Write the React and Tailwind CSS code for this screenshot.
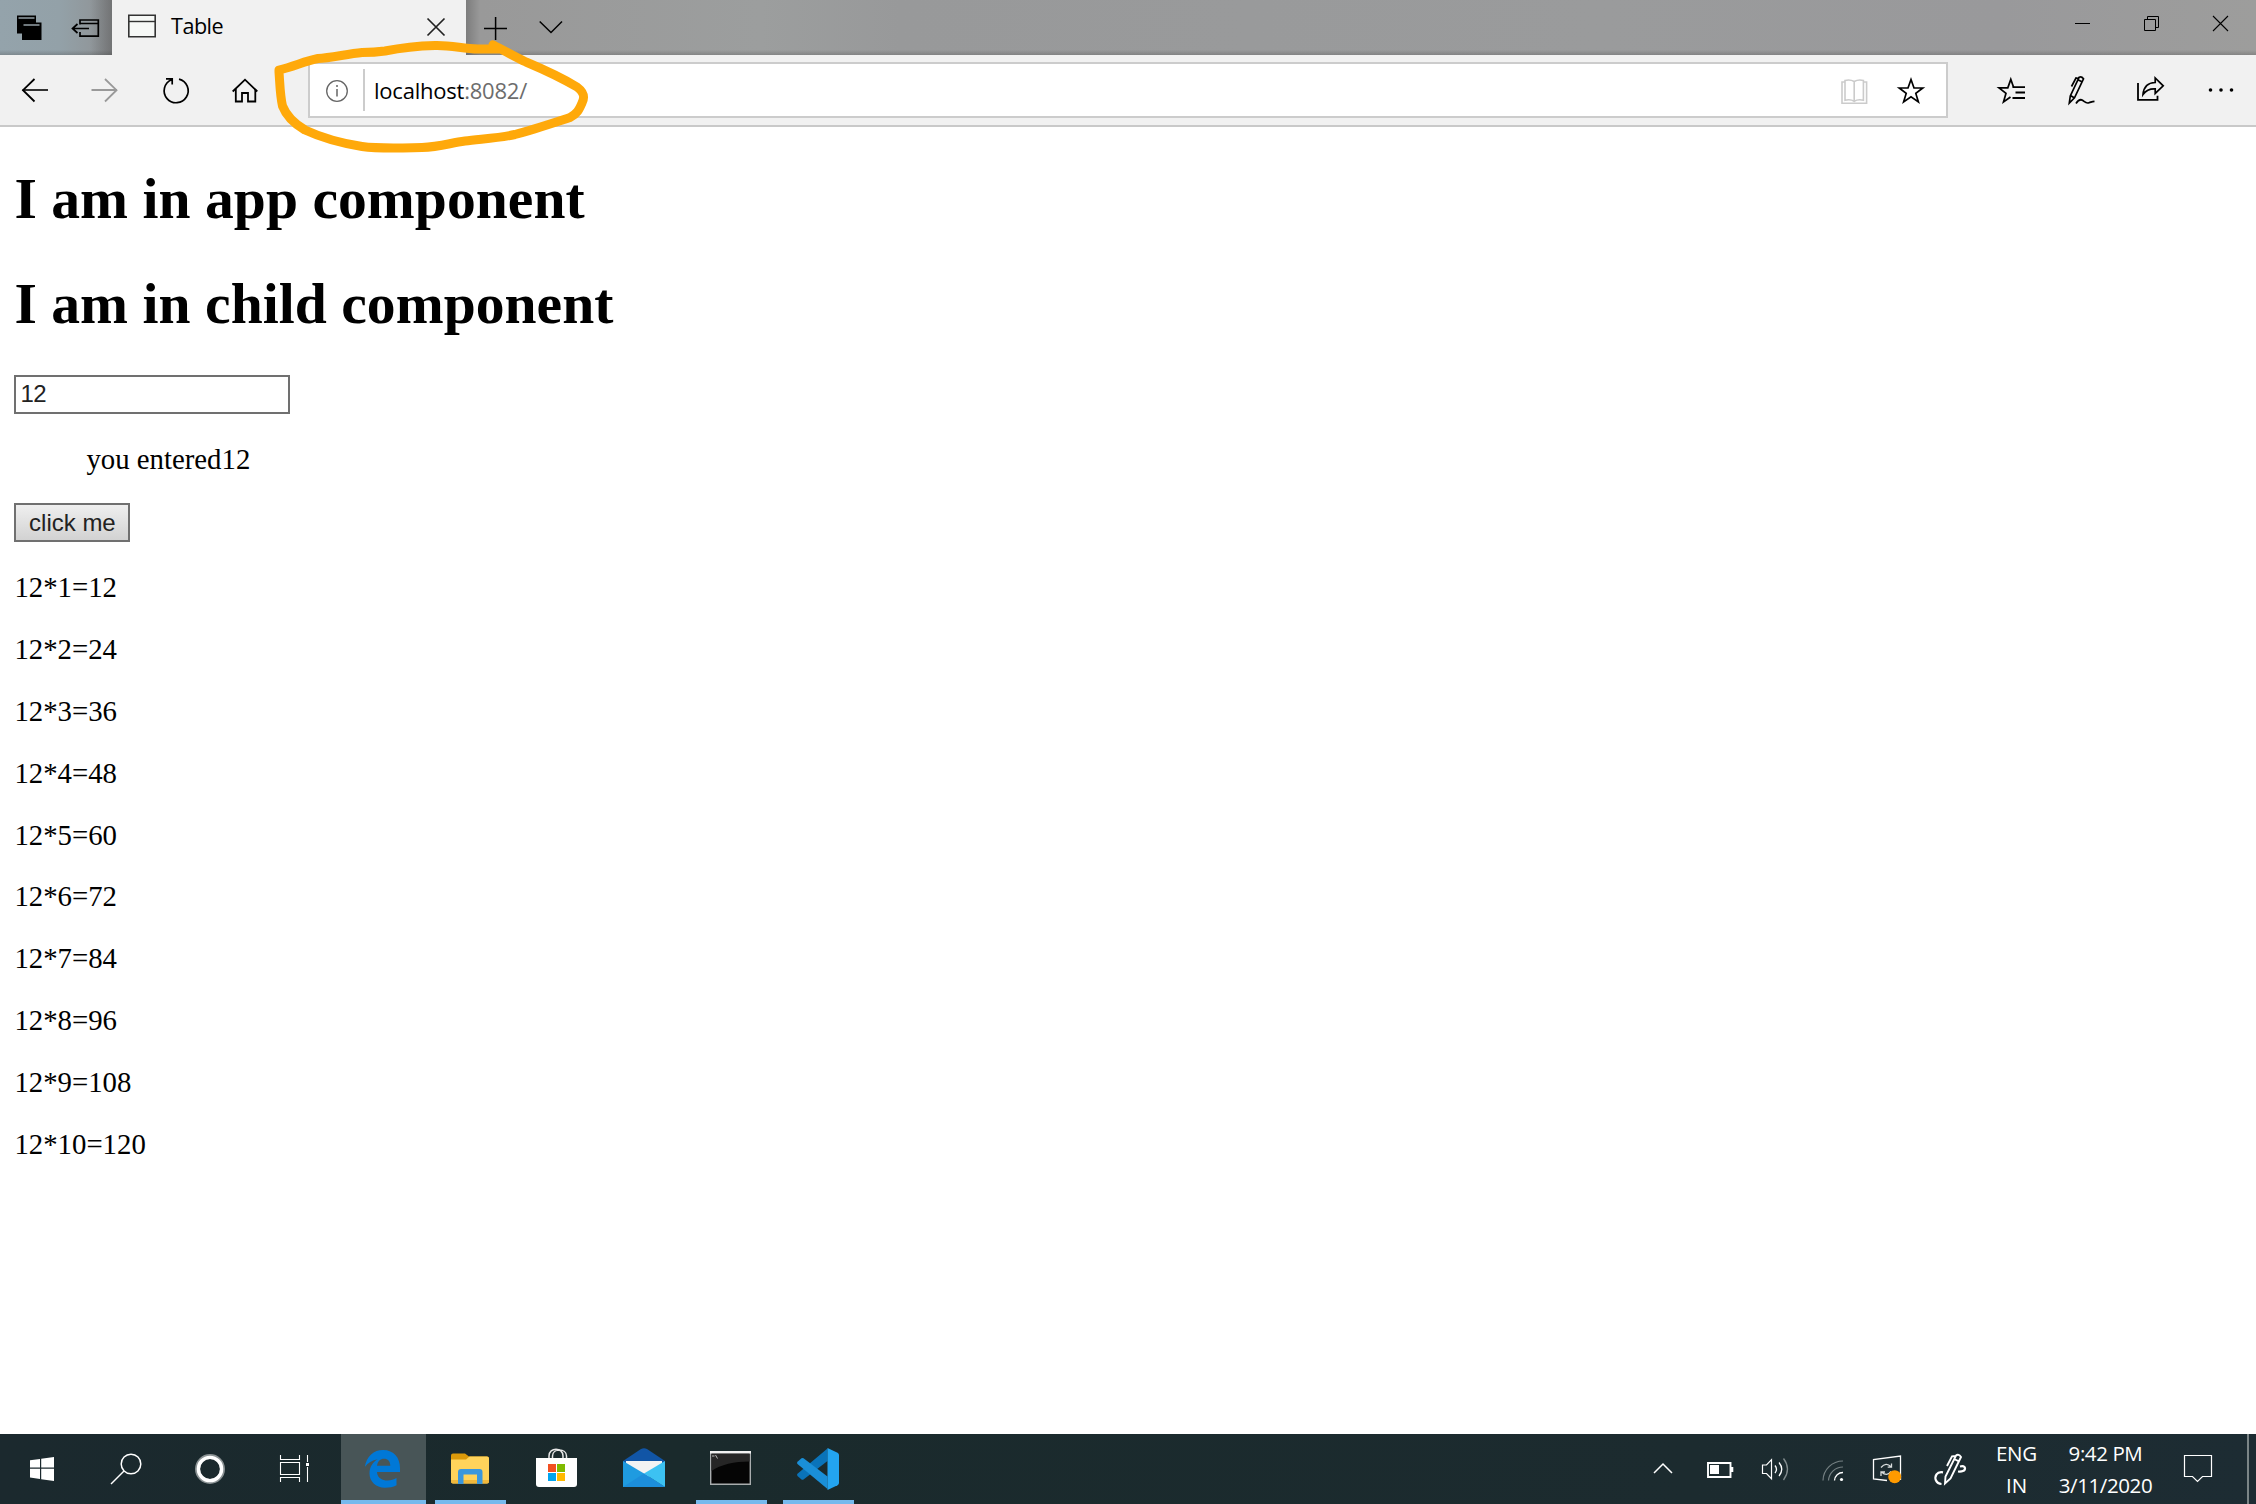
import React from "react";

/* Icon whose drawing coordinates are window coordinates: (x, y) is the cell's corner. */
function Cell({ x, y, w, h, className = "", children }) {
  return (
    <svg
      width={w}
      height={h}
      viewBox={`${x} ${y} ${w} ${h}`}
      fill="none"
      stroke="#000"
      strokeWidth="2"
      className={`block shrink-0 ${className}`}
    >
      {children}
    </svg>
  );
}

function TabBar() {
  return (
    <div className="flex h-[55px] bg-[linear-gradient(0deg,rgba(60,60,60,0.25)_0px,transparent_5px),linear-gradient(90deg,#94a3ab_0px,#93a1a8_60px,#8f9193_112px,#999999_480px,#9c9e9e_760px,#98999a_900px,#9a9b9c_1600px,#99999b_2000px,#9d9d9c_2256px)]">
      <div className="flex w-[112px] bg-[linear-gradient(90deg,transparent_90px,rgba(60,60,60,0.35)_112px)]">
        <Cell x={0} y={0} w={56} h={55}>
          <path d="M17 15.500h19v7h5.500v17.500H22v-6.500h-5z" fill="#000" stroke="none" />
          <path d="M18.500 18h16M23.500 25h16" stroke="#94a0a6" strokeWidth="1.400" />
        </Cell>
        <Cell x={56} y={0} w={56} h={55}>
          <path d="M80 24.500V20h18.300v16.200H80V32M80 23.500h18" strokeWidth="1.700" />
          <path d="M89 28.500H72.500M77.500 24l-5 4.500 5 4.500" strokeWidth="1.700" />
        </Cell>
      </div>
      <div className="flex w-[354px] items-center bg-[#f1f1f1]">
        <Cell x={112} y={0} w={60} h={55}>
          <path d="M128.800 15.300h26.400v21.400h-26.400z" fill="#f6f8f6" stroke="#333" strokeWidth="1.600" />
          <path d="M128.800 21.500h26.400" stroke="#333" strokeWidth="1.400" />
        </Cell>
        <span className="-ml-px grow pb-[3px] text-[21.6px] leading-[30px] tracking-[-0.5px] text-black">
          Table
        </span>
        <Cell x={406} y={0} w={60} h={55}>
          <path d="M427.500 18.500l17 17M444.500 18.500l-17 17" stroke="#222" strokeWidth="1.700" />
        </Cell>
      </div>
      <div className="flex grow bg-[linear-gradient(90deg,rgba(60,60,60,0.3)_0px,transparent_14px)]">
        <Cell x={466} y={0} w={58} h={55}>
          <path d="M484 28.500h23M495.600 17v23" strokeWidth="1.500" />
        </Cell>
        <Cell x={524} y={0} w={54} h={55}>
          <path d="M539.700 21.500l11.300 11 11-11" strokeWidth="1.500" />
        </Cell>
        <div className="grow" />
        <Cell x={2048} y={0} w={69} h={55}>
          <path d="M2075 23.500h15" strokeWidth="1" />
        </Cell>
        <Cell x={2117} y={0} w={70} h={55}>
          <path d="M2144.500 19.500h11v11h-11zM2147.500 19.500v-3h11v11h-3" strokeWidth="1" />
        </Cell>
        <Cell x={2187} y={0} w={69} h={55}>
          <path d="M2213 16l15 15M2228 16l-15 15" strokeWidth="1.100" />
        </Cell>
      </div>
    </div>
  );
}

function Toolbar() {
  return (
    <div className="flex h-[72px] border-b-2 border-[#c9c9c9] bg-[#f1f1f1]">
      <Cell x={0} y={55} w={70} h={70}>
        <path d="M22.500 90H48" stroke="#333" />
        <path d="M34.500 79L23 90.200l11.500 11.300" strokeWidth="1.800" />
      </Cell>
      <Cell x={70} y={55} w={70} h={70}>
        <path d="M91.500 90H117M105 79l11.500 11.200L105 101.500" stroke="#999" strokeWidth="1.800" />
      </Cell>
      <Cell x={140} y={55} w={70} h={70}>
        <path d="M179 79.100a12 12 0 1 1-7.500 0.600M166 78.900h6.200v5.700" strokeWidth="1.700" />
      </Cell>
      <Cell x={210} y={55} w={98} h={70}>
        <path d="M232.700 91.500L245 79.700l12.300 11.800" strokeWidth="1.800" />
        <path d="M235.800 89v12.500h6.200v-8.500h6v8.500h7.300V89" strokeWidth="1.800" />
      </Cell>
      <div className="mt-[7px] flex h-14 w-[1640px] items-center border-2 border-[#cccccc] bg-white">
        <Cell x={310} y={64} w={53} h={52}>
          <circle cx="337" cy="91" r="10.300" stroke="#666" strokeWidth="1.300" />
          <path d="M337 89v7.500M337 85v2" stroke="#666" strokeWidth="1.500" />
        </Cell>
        <div className="h-[42px] w-0.5 bg-[#cccccc]" />
        <span className="ml-[9px] grow text-[22px] leading-[30px] tracking-[-0.22px] text-black">
          localhost<span className="text-[#6d6d6d]">:8082/</span>
        </span>
        <Cell x={1826} y={64} w={56} h={52}>
          <path d="M1845 80.500v19.700c3-.600 6.500-.600 9.200 1 2.700-1.600 6.200-1.600 9.200-1V80.500c-3-.700-6.500-.500-9.200 1-2.700-1.500-6.200-1.700-9.200-1zM1854.200 81.500v20M1845 82h-3v21.200h24.600V82h-3" stroke="#cbcbcb" strokeWidth="1.600" />
        </Cell>
        <Cell x={1882} y={64} w={64} h={52}>
          <path d="M1911 79.500l3 8.500h8.800l-7 5.400 2.600 8.600-7.400-5.200-7.400 5.200 2.600-8.600-7-5.400h8.800z" strokeWidth="1.700" />
        </Cell>
      </div>
      <Cell x={1948} y={55} w={98} h={70}>
        <path d="M2010.500 97l-7 5 2.500-8.700-7-5.400h8.800l3-8.500 2.800 7.800" strokeWidth="1.700" />
        <path d="M2012.500 87.200h12.500M2015.500 92.500h9.500M2012.500 98h12.500" strokeWidth="1.800" />
      </Cell>
      <Cell x={2046} y={55} w={70} h={70}>
        <path d="M2069.300 103l1-7 8.900-18.800q2.300-1.300 4.300 1.600l-9 19zM2070.500 95.500l4 2.500M2078.300 80l4.200 1.900M2079 78.600l-3-.6-4.500 8.500" strokeWidth="1.700" />
        <path d="M2076 103.500c2-3 4.500-4.500 6.500-3.200 2.500 1.700 3.500 3.500 6.500 2.500 2.500-.8 3-1.300 5.500-1.500" strokeWidth="1.700" />
      </Cell>
      <Cell x={2116} y={55} w={69} h={70}>
        <path d="M2138 83v16.800h19.500v-4" strokeWidth="1.800" />
        <path d="M2143 94.500c.6-7 4.500-11.800 12.200-12v-4.500l8 7.800-8 7.600v-4.500c-5.600-.300-9.200 1.500-12.200 5.600z" strokeWidth="1.700" />
      </Cell>
      <Cell x={2185} y={55} w={71} h={70}>
        <g fill="#000" stroke="none">
          <circle cx="2210.500" cy="90" r="1.800" />
          <circle cx="2221" cy="90" r="1.800" />
          <circle cx="2231.500" cy="90" r="1.800" />
        </g>
      </Cell>
    </div>
  );
}

function PageContent() {
  const factors = [1, 2, 3, 4, 5, 6, 7, 8, 9, 10];
  return (
    <div className="flex grow flex-col items-start bg-white px-[14.4px] pt-[38.6px] font-['Liberation_Serif',serif] text-[28.8px] leading-[33px] text-black">
      <h1 className="mb-[39.4px] text-[57.6px] leading-[66px] font-bold tracking-[0.03px]">I am in app component</h1>
      <h1 className="mb-[38px] text-[57.6px] leading-[66px] font-bold tracking-[0.03px]">I am in child component</h1>
      <input
        readOnly
        value="12"
        className="h-[39px] w-[276px] border-2 border-[#707070] bg-white px-[4px] font-['Liberation_Sans',sans-serif] text-[24px] leading-[27px] tracking-[-0.4px] text-[#222]"
      />
      <p className="mt-[29px] ml-[72px]">you entered12</p>
      <button className="mt-[27.500px] h-[39px] w-[116px] border-2 border-[#707070] bg-[linear-gradient(#efefef,#d2d2d2)] text-center font-['Liberation_Sans',sans-serif] text-[24px] leading-[35px] text-[#222]">
        click me
      </button>
      <div className="mt-[29px] flex flex-col gap-[28.8px]">
        {factors.map((n) => (
          <p key={n}>{`12*${n}=${12 * n}`}</p>
        ))}
      </div>
    </div>
  );
}

function TaskButton({ underline = "", active = false, children }) {
  return (
    <div className={`flex h-[70px] flex-col items-center ${active ? "bg-[#485557]" : ""}`}>
      <div className="h-[66px]">{children}</div>
      <div className={`h-1 ${underline}`} />
    </div>
  );
}

function Taskbar() {
  return (
    <div className="flex h-[70px] bg-[linear-gradient(90deg,#1b292e,#1a2a2c_30%,#1c2b2f_75%,#1d2c33)]">
      <Cell x={0} y={1434} w={84} h={70}>
        <path d="M30 1460.300l10-1.400v8.600H30zM41.200 1458.700l12.800-1.800v10.600H41.200zM30 1468.800h10v10.200l-10-1.400zM41.200 1468.800H54v12.300l-12.800-1.900z" fill="#fff" stroke="none" />
      </Cell>
      <Cell x={84} y={1434} w={84} h={70}>
        <circle cx="131" cy="1464" r="9.800" stroke="#fff" strokeWidth="1.500" />
        <path d="M124 1471l-13 13" stroke="#fff" strokeWidth="1.500" />
      </Cell>
      <Cell x={168} y={1434} w={84} h={70}>
        <circle cx="210" cy="1469" r="12.500" stroke="#8b9294" strokeWidth="5" />
        <circle cx="210" cy="1469" r="11.600" stroke="#fff" strokeWidth="3.400" />
      </Cell>
      <Cell x={252} y={1434} w={89} h={70}>
        <path d="M280.500 1455v4.500h19V1455M280.500 1482v-4.500h19v4.500M280.500 1462.500h19v12h-19zM307.500 1455v7M307.500 1467v15" stroke="#fff" strokeWidth="1.100" />
        <path d="M306 1463h3v3h-3z" fill="#fff" stroke="none" />
      </Cell>
      <TaskButton active underline="w-[85px] bg-[#76b9ed]">
        <Cell x={341} y={1434} w={85} h={66}>
          <path d="M364.800 1467.500C366.300 1456 374 1450 383 1450c11 0 17 7.800 17 18v4h-23c.3 6.300 5.500 8.500 10.500 8.500 3.500 0 6.500-1 9-2.400v7.200c-3.500 1.800-7.300 2.500-11.500 2.500-9.500 0-15.500-6.500-15.500-14.500 0-6.300 3.300-11.300 8.300-14-5.700 1-10.300 4-13 7.700zM377 1465.800h13.300c0-4.500-2.500-7-6.300-7-3.700 0-6.300 2.600-7 7z" fill="#0078d7" fillRule="evenodd" stroke="none" />
        </Cell>
      </TaskButton>
      <TaskButton underline="w-[71px] bg-[#76b9ed]">
        <Cell x={426} y={1434} w={89} h={66}>
          <g stroke="none">
            <path d="M451 1455.500q0-2 2-2h12l4 3h18q2 0 2 2v6h-38z" fill="#dc9a0a" />
            <path d="M451 1459.500h15l3.500-3h17.500q2 0 2 2v23q0 2-2 2h-34q-2 0-2-2z" fill="#ffd35b" />
            <path d="M451 1480h38v1.500q0 2-2 2h-34q-2 0-2-2z" fill="#f0b83c" />
            <path d="M458 1484v-12q0-3 3-3h18.500q3 0 3 3v12h-5.500v-9.500h-13.500v9.500z" fill="#3a97dd" />
          </g>
        </Cell>
      </TaskButton>
      <TaskButton>
        <Cell x={515} y={1434} w={86} h={66}>
          <path d="M549 1459v-3c0-9 14-9 14 0v3M552.500 1459v-3c0-8 14-8 14 0v3" stroke="#e6e6e6" strokeWidth="1.500" />
          <g stroke="none">
            <path d="M536 1458h41v26q0 3-3 3h-35q-3 0-3-3z" fill="#fff" />
            <path d="M548 1464h8v8h-8z" fill="#f25022" />
            <path d="M557 1464h8v8h-8z" fill="#7fba00" />
            <path d="M548 1473h8v8h-8z" fill="#00a4ef" />
            <path d="M557 1473h8v8h-8z" fill="#ffb900" />
          </g>
        </Cell>
      </TaskButton>
      <TaskButton>
        <Cell x={601} y={1434} w={87} h={66}>
          <g stroke="none">
            <path d="M623 1461l18-12q3-1.500 6 0l18 12v8h-42z" fill="#1155a6" />
            <path d="M626 1461h36v9l-18 9-18-9z" fill="#f3f3f3" />
            <path d="M623 1461l21 12.500 21 13.500h-42z" fill="#1f9be0" />
            <path d="M665 1461l-21 12.500 21 13.500z" fill="#3cc2f2" />
            <path d="M623 1487l21-13.500 21 13.500z" fill="#1c8edb" />
          </g>
        </Cell>
      </TaskButton>
      <TaskButton underline="w-[71px] bg-[#76b9ed]">
        <Cell x={688} y={1434} w={87} h={66}>
          <path d="M710.700 1452h39.600v32.300h-39.600z" fill="#050505" stroke="#a9adae" strokeWidth="1.400" />
          <path d="M711.500 1454h38v7.500c-15 0-29 3-38 9.500z" fill="#262626" stroke="none" />
          <path d="M710 1452.300h41" stroke="#f1f1f1" strokeWidth="2.400" />
          <path d="M712 1456h2.500M715.500 1455l2 3.500" stroke="#bbb" strokeWidth="1" />
        </Cell>
      </TaskButton>
      <TaskButton underline="w-[71px] bg-[#76b9ed]">
        <Cell x={775} y={1434} w={87} h={66}>
          <g stroke="none">
            <path d="M827.500 1448.500v12.500l-24 18.500q-1 .600-2 0l-4-3.500q-1-1.200 0-2.200z" fill="#0a73b9" />
            <path d="M827.500 1489v-12.500l-24-18.200q-1-.600-2 0l-4 3.400q-1 1.200 0 2.200z" fill="#1a8fd8" />
            <path d="M827.500 1448l10 4.700q1.500.8 1.500 2.300v28q0 1.500-1.500 2.300l-10 4.700z" fill="#23a4f0" />
          </g>
        </Cell>
      </TaskButton>
      <div className="grow" />
      <Cell x={1634} y={1434} w={58} h={70}>
        <path d="M1654 1473l9-9 9 9" stroke="#fff" strokeWidth="1.500" />
      </Cell>
      <Cell x={1692} y={1434} w={56} h={70}>
        <path d="M1708 1463h22.500v14H1708z" stroke="#fff" strokeWidth="1.900" />
        <path d="M1710 1465h9v9h-9zM1731 1467h2.300v5h-2.300z" fill="#fff" stroke="none" />
      </Cell>
      <Cell x={1748} y={1434} w={56} h={70}>
        <path d="M1762.500 1465h4l5-5.300v19l-5-5.200h-4z" stroke="#fff" strokeWidth="1.200" />
        <path d="M1775 1465.500q3 3.800 0 7.600M1779 1462.500q5.500 6.700 0 13.500" stroke="#fff" strokeWidth="1.300" />
        <path d="M1783.500 1458.500q8 10.500 0 21.500" stroke="#808a8c" strokeWidth="1.300" />
      </Cell>
      <Cell x={1804} y={1434} w={56} h={70}>
        <path d="M1823 1480.500a20 20 0 0 1 20-19.500M1828.500 1480.500a14.500 14.500 0 0 1 14.500-13.500" stroke="#758083" strokeWidth="1.200" />
        <path d="M1834.500 1480.500a8.500 8.500 0 0 1 8.500-8" stroke="#fff" strokeWidth="1.300" />
        <circle cx="1841.500" cy="1479.500" r="1.600" fill="#fff" stroke="none" />
      </Cell>
      <Cell x={1860} y={1434} w={60} h={70}>
        <path d="M1887 1480.500l-13.500-1.500v-19.500l27-3.500v24" stroke="#fff" strokeWidth="1.300" />
        <path d="M1881 1467.500q5-6 10-.8M1891.500 1463.500v3.700h-3.800M1891 1471.500q-4 5.500-9.500.5M1881 1476v-4h4" stroke="#d9dddd" strokeWidth="1.300" />
        <circle cx="1894.700" cy="1476.700" r="6.500" fill="#ff9a00" stroke="none" />
      </Cell>
      <Cell x={1920} y={1434} w={62} h={70}>
        <path d="M1945 1483.500l.5-7 10.500-21q2.500-2 5 1.500l-10.500 21.500zM1954 1459l5 2.300M1955.500 1456l-3.500.3-5 9.700" stroke="#fff" strokeWidth="1.900" />
        <path d="M1943 1472.300q-4.500-.8-6.500 2c-2.500 4-.5 9.500 5 9.700M1960 1466.500q4.500-1 5 1.500c.3 3-3.500 4-7 3.500" stroke="#fff" strokeWidth="2.200" />
      </Cell>
      <div className="flex w-[70px] flex-col items-center pt-[3px] text-[20.5px] leading-[32px] tracking-[-0.2px] text-white">
        <span className="-ml-px">ENG</span>
        <span className="-ml-px">IN</span>
      </div>
      <div className="flex w-[107px] flex-col items-center pt-[3px] text-[20.5px] leading-[32px] tracking-[-0.4px] whitespace-nowrap text-white">
        <span>9:42 PM</span>
        <span>3/11/2020</span>
      </div>
      <Cell x={2159} y={1434} w={88} h={70}>
        <path d="M2184.500 1455.500h27v21h-9l-5 5-5-5h-8z" stroke="#fff" strokeWidth="1.200" />
      </Cell>
      <div className="w-[9px] border-l-2 border-[#7b8587]" />
    </div>
  );
}

function Annotation() {
  return (
    <svg
      width="340"
      height="125"
      viewBox="260 35 340 125"
      fill="none"
      stroke="#ffa90a"
      strokeWidth="9"
      strokeLinecap="round"
      strokeLinejoin="round"
      className="pointer-events-none absolute top-[35px] left-[260px]"
    >
      <path d="M279 70C295 66 305 61 318 58.500C330 58 347 54 362 52.500C370 52.500 378 52 385 51C400 48 415 46 435 45.500C452 45 463 49 478 49H500L493 45C505 51 515 57 526 62C545 70 562 78 577 87C585 93 584.500 98 582 103C579 110 577 114 570 117.500C550 124 532 130 515 134.500C500 138 480 139 465 141C450 143 440 147 422 147.500C400 148 380 149 362 146.500C340 143 320 137 305 130C293 123 286 115 282.500 106C280 95 280 85 279 72Z" />
    </svg>
  );
}

export default function App() {
  return (
    <div className="relative flex h-[1504px] w-[2256px] flex-col overflow-hidden bg-white font-['Open_Sans','Noto_Sans',sans-serif]">
      <TabBar />
      <Toolbar />
      <PageContent />
      <Taskbar />
      <Annotation />
    </div>
  );
}
